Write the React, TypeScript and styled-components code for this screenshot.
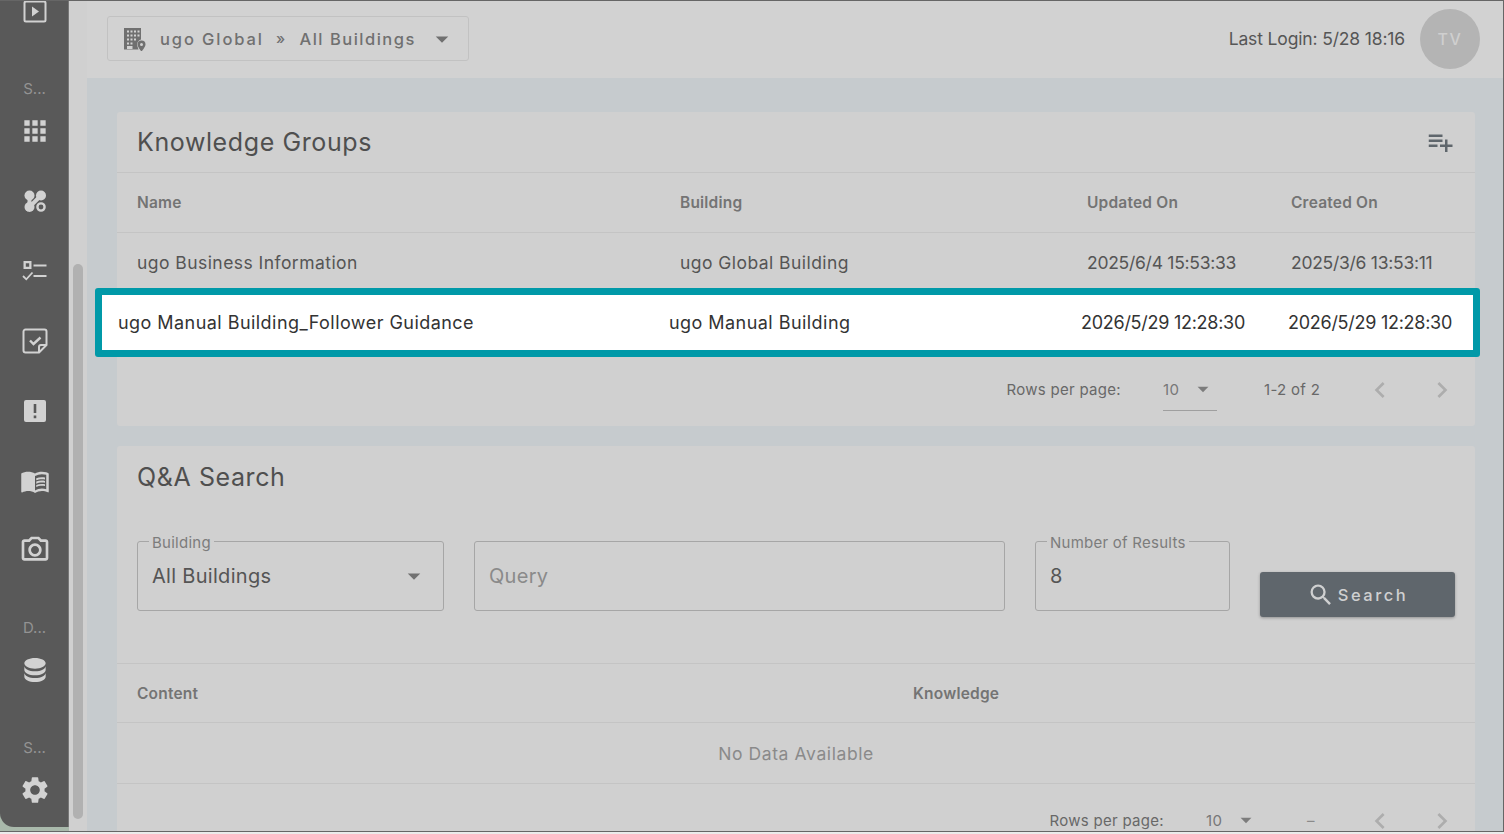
import { FC, ReactNode } from 'react';
import styled, { createGlobalStyle } from 'styled-components';
import {
  MdApps,
  MdArrowDropDown,
  MdChevronLeft,
  MdChevronRight,
  MdMenuBook,
  MdOutlinePhotoCamera,
  MdPlaylistAdd,
  MdSearch,
  MdSettings,
} from 'react-icons/md';

const FONT = `Inter, "Liberation Sans", sans-serif`;

const PlayIcon = () => (
  <svg width="26" height="26" viewBox="0 0 26 26" fill="none">
    <rect x="2.5" y="2.5" width="21" height="20" rx="1.5" stroke="currentColor" strokeWidth="2" />
    <path d="M10 7.5 L17 12.5 L10 17.5 Z" fill="currentColor" />
  </svg>
);

const NodesIcon = () => (
  <svg width="26" height="26" viewBox="0 0 26 26" fill="none">
    <circle cx="7.5" cy="7.5" r="5" fill="currentColor" />
    <circle cx="19" cy="7.5" r="5" fill="currentColor" />
    <circle cx="7.5" cy="19" r="5" fill="currentColor" />
    <path d="M7.5 7.5 L7.5 19 L19 7.5" stroke="currentColor" strokeWidth="4" />
    <circle cx="19" cy="19" r="3.6" stroke="currentColor" strokeWidth="2.4" />
  </svg>
);

const ChecklistIcon = () => (
  <svg width="26" height="26" viewBox="0 0 26 26" fill="none">
    <path d="M1.500 3h8v8h-8z M3.800 5.300v3.400h3.400V5.300z" fill="currentColor" fillRule="evenodd" />
    <path d="M11.500 7.500h13 M11.500 18h13" stroke="currentColor" strokeWidth="2" />
    <path d="M1 18 L4.300 21.300 L10.500 14.500" stroke="currentColor" strokeWidth="1.800" />
  </svg>
);

const NoteCheckIcon = () => (
  <svg width="26" height="26" viewBox="0 0 26 26" fill="none">
    <path
      d="M3.500 1.500h19a2 2 0 0 1 2 2V17l-7.500 7.500H3.500a2 2 0 0 1-2-2v-19a2 2 0 0 1 2-2z"
      stroke="currentColor"
      strokeWidth="2"
      strokeLinejoin="round"
    />
    <path d="M24 17h-5a2 2 0 0 0-2 2v5" stroke="currentColor" strokeWidth="2" />
    <path d="M8 12.500l3.500 3.500 7-6.500" stroke="currentColor" strokeWidth="2.400" />
  </svg>
);

const AlertBoxIcon = () => (
  <svg width="26" height="26" viewBox="0 0 26 26">
    <path
      d="M4 2h18a2 2 0 0 1 2 2v18a2 2 0 0 1-2 2H4a2 2 0 0 1-2-2V4a2 2 0 0 1 2-2z M11.700 6v9h2.600V6z M11.700 17.500v2.700h2.600v-2.700z"
      fill="currentColor"
      fillRule="evenodd"
    />
  </svg>
);

const DatabaseIcon = () => (
  <svg width="32" height="32" viewBox="0 0 24 24">
    <path
      fill="currentColor"
      d="M12,3C7.58,3 4,4.79 4,7C4,9.21 7.58,11 12,11C16.42,11 20,9.21 20,7C20,4.79 16.42,3 12,3M4,9V12C4,14.21 7.58,16 12,16C16.42,16 20,14.21 20,12V9C20,11.21 16.42,13 12,13C7.58,13 4,11.21 4,9M4,14V17C4,19.21 7.58,21 12,21C16.42,21 20,19.21 20,17V14C20,16.21 16.42,18 12,18C7.58,18 4,16.21 4,14Z"
    />
  </svg>
);

const BuildingPinIcon = () => (
  <svg width="24" height="24" viewBox="0 0 24 24">
    <path
      fill="currentColor"
      fillRule="evenodd"
      d="M1 1h17v11.500a6 6 0 0 0-4 5.500l1.500 4.500H1z M4 3.500v2h2v-2z M7.500 3.500v2h2v-2z M11 3.500v2h2v-2z M14.500 3.500v2h2v-2z M4 7.500v2h2v-2z M7.500 7.500v2h2v-2z M11 7.500v2h2v-2z M14.500 7.500v2h2v-2z M4 11.500v2h2v-2z M7.500 11.500v2h2v-2z M11 11.500v2h2v-2z M4 15.500v2h2v-2z M7.500 15.500v2h2v-2z M4 19v3h5.500v-3z"
    />
    <path
      fill="currentColor"
      fillRule="evenodd"
      d="M18.500 13.500a4 4 0 0 1 4 4c0 2.500-4 7-4 7s-4-4.500-4-7a4 4 0 0 1 4-4z M18.500 16a1.500 1.500 0 1 0 0 3 1.500 1.500 0 0 0 0-3z"
    />
  </svg>
);

const GlobalStyle = createGlobalStyle`
  html, body {
    margin: 0;
    padding: 0;
    width: 1504px;
    height: 834px;
    overflow: hidden;
    background: #ebebeb;
    font-family: ${FONT};
  }
  * { box-sizing: border-box; }
`;

const Frame = styled.div`
  display: flex;
  width: 1504px;
  height: 832px;
  overflow: hidden;
  background: #a9b9ab;
  border-top: 1px solid #666;
  border-bottom: 1px solid #666;
  border-right: 1px solid #666;
`;

const Sidebar = styled.nav`
  flex: 0 0 69px;
  height: 826px;
  overflow: hidden;
  background: #595959;
  border-bottom-left-radius: 14px;
  color: #d2d2d2;
  box-shadow: inset -1px 0 #777;
`;

const SideList = styled.div`
  display: flex;
  flex-direction: column;
  margin-top: -24px;
`;

const SideItem = styled.div<{ $tight?: boolean }>`
  display: flex;
  flex: 0 0 70px;
  align-items: center;
  justify-content: center;
  margin-top: ${(p) => (p.$tight ? '-1px' : '0')};

  svg { display: block; }
`;

const SideLabel = styled.div<{ $compact?: boolean }>`
  display: flex;
  flex: 0 0 ${(p) => (p.$compact ? '49px' : '50px')};
  align-items: flex-end;
  justify-content: center;
  font-size: 15px;
  line-height: 14px;
  color: #939393;
`;

const Gutter = styled.div`
  flex: 0 0 18px;
  padding: 263px 4px 0;
  background: #d0d0d0;
`;

const Thumb = styled.div`
  height: 555px;
  border-radius: 5px;
  background: #b1b1b1;
`;

const Main = styled.main`
  position: relative;
  display: flex;
  flex: 1;
  flex-direction: column;
  min-width: 0;
  background: #c6cbce;
`;

const TopBar = styled.header`
  display: flex;
  flex: 0 0 77px;
  align-items: center;
  justify-content: space-between;
  padding: 0 23px 2px 20px;
  background: #d2d2d2;
`;

const ScopeButton = styled.div`
  display: flex;
  align-items: center;
  width: 362px;
  height: 45px;
  padding: 0 10px 0 15px;
  color: #707070;
  border: 1px solid #c2c2c2;
  border-radius: 3px;
  font-size: 16.500px;
  letter-spacing: 1.500px;
  font-weight: 500;
`;

const ScopeText = styled.span`
  margin-left: 13px;
  letter-spacing: 1.900px;
`;

const ScopeSep = styled.span`
  margin: 0 13px 0 12px;
  font-size: 15px;
`;

const ScopeCaret = styled.span`
  display: flex;
  margin-left: auto;
  margin-right: 1px;
  font-size: 30px;
`;

const UserBox = styled.div`
  display: flex;
  align-items: center;
  gap: 15px;
  color: #565656;
  font-size: 17.500px;
  letter-spacing: -0.150px;
`;

const Avatar = styled.div`
  display: flex;
  align-items: center;
  justify-content: center;
  width: 60px;
  height: 60px;
  border-radius: 50%;
  background: #b4b4b4;
  color: #cfcfcf;
  font-size: 16px;
  font-weight: 500;
  letter-spacing: 1.500px;
`;

const Content = styled.div`
  display: flex;
  flex-direction: column;
  gap: 20px;
  padding: 34px 28px 0 30px;
`;

const Card = styled.section`
  flex-shrink: 0;
  border-radius: 3px;
  background: #d0d0d0;
`;

const CardHeader = styled.div<{ $flat?: boolean }>`
  display: flex;
  align-items: center;
  justify-content: space-between;
  height: 61px;
  padding: 0 20px;
  border-bottom: ${(p) => (p.$flat ? '0' : '1px solid #c4c4c4')};
  color: #4f4f4f;

  svg { display: block; }
`;

const CardTitle = styled.h2`
  margin: 0;
  font-size: 25px;
  font-weight: 400;
  letter-spacing: 0.600px;
  color: #4f4f4f;
`;

const Row = styled.div<{ $head?: boolean; $topLine?: boolean; $columns: string }>`
  position: relative;
  display: grid;
  grid-template-columns: ${(p) => p.$columns};
  align-items: center;
  height: 60px;
  padding: 0 20px;
  border-top: ${(p) => (p.$topLine ? '1px solid #c4c4c4' : '0')};
  border-bottom: 1px solid #c4c4c4;
  color: ${(p) => (p.$head ? '#747474' : '#555')};
  font-size: ${(p) => (p.$head ? '15.500px' : '17.500px')};
  font-weight: ${(p) => (p.$head ? 600 : 400)};
  letter-spacing: ${(p) => (p.$head ? '0.200px' : '0.450px')};
`;

const DateCell = styled.span`
  letter-spacing: -0.015em;
`;

// teal callout drawn over the second row
const Highlight = styled.div`
  position: absolute;
  top: -5px;
  left: -22px;
  right: -5px;
  bottom: -5px;
  display: grid;
  grid-template-columns: 551px 412px 207px 1fr;
  align-items: center;
  padding-left: 16px;
  background: #fff;
  border: 7px solid #0099a8;
  border-radius: 3px;
  color: #333;
  font-size: 18px;
`;

const NoData = styled.div`
  display: flex;
  align-items: center;
  justify-content: center;
  height: 61px;
  border-bottom: 1px solid #c4c4c4;
  color: #8a8a8a;
  font-size: 17.500px;
  letter-spacing: 0.600px;
`;

const Pager = styled.div`
  display: flex;
  align-items: center;
  justify-content: flex-end;
  height: 73px;
  padding-right: 17px;
  color: #686868;
  font-size: 15px;
  letter-spacing: 0.300px;
`;

const PerPage = styled.div<{ $underlined?: boolean }>`
  display: flex;
  align-items: center;
  width: 54px;
  height: 42px;
  margin-left: 42px;
  border-bottom: 1px solid ${(p) => (p.$underlined ? '#9f9f9f' : 'transparent')};
  color: #777;

  svg { flex-shrink: 0; margin-left: 11px; color: #7c7c7c; }
`;

const PageRange = styled.div<{ $dim?: boolean }>`
  width: ${(p) => (p.$dim ? '62px' : '105px')};
  padding-left: 47px;
  color: ${(p) => (p.$dim ? '#8a8a8a' : '#686868')};
  white-space: nowrap;
`;

const PageArrows = styled.div`
  display: flex;
  gap: 30px;
  margin-left: 42px;
  color: #adadad;

  svg { display: block; }
`;

const SearchRow = styled.div`
  display: flex;
  align-items: flex-start;
  gap: 30px;
  padding: 34px 20px 46px;
`;

const Field = styled.fieldset<{ $width: number }>`
  position: relative;
  display: flex;
  align-items: center;
  justify-content: space-between;
  flex: 0 0 ${(p) => p.$width}px;
  height: 78px;
  min-width: 0;
  margin: -8px 0 0;
  padding: 0 14px 8px;
  border: 1px solid #a6a6a6;
  border-radius: 3px;
  color: #555;
  font-size: 20px;
  letter-spacing: 0.300px;
`;

const FieldLegend = styled.legend<{ $empty?: boolean }>`
  height: 16px;
  padding: 0 ${(p) => (p.$empty ? '0' : '3px')};
  margin-left: -3px;
  color: #7c7c7c;
  font-size: 15px;
  line-height: 20px;
  letter-spacing: 0.250px;
`;

const FieldPlaceholder = styled.span`
  color: #8a8a8a;
`;

const FieldCaret = styled.span`
  display: flex;
  color: #717171;
  font-size: 30px;
`;

const SearchButton = styled.button`
  display: flex;
  flex: 0 0 195px;
  align-items: center;
  justify-content: center;
  gap: 3px;
  height: 45px;
  margin-top: 31px;
  padding: 0;
  border: 0;
  border-radius: 3px;
  background: #5f666c;
  box-shadow: 0 1px 3px rgba(0, 0, 0, 0.3);
  color: #cfd0d1;
  font-family: ${FONT};
  font-size: 16.500px;
  font-weight: 500;
  letter-spacing: 2.500px;
`;

const NAV_TOP: ReactNode[] = [<NodesIcon />, <ChecklistIcon />, <NoteCheckIcon />, <AlertBoxIcon />, <MdMenuBook size={30} />];

const GROUP_COLUMNS = '543px 407px 204px 1fr';
const QA_COLUMNS = '776px 1fr';

const App: FC = () => {
  return (
    <>
      <GlobalStyle />
      <Frame>
        <Sidebar>
          <SideList>
            <SideItem><PlayIcon /></SideItem>
            <SideLabel $compact>S...</SideLabel>
            <SideItem><MdApps size={32} /></SideItem>
            {NAV_TOP.map((icon, i) => (
              <SideItem key={i}>{icon}</SideItem>
            ))}
            <SideItem $tight><MdOutlinePhotoCamera size={32} /></SideItem>
            <SideLabel>D...</SideLabel>
            <SideItem><DatabaseIcon /></SideItem>
            <SideLabel>S...</SideLabel>
            <SideItem><MdSettings size={32} /></SideItem>
          </SideList>
        </Sidebar>
        <Gutter>
          <Thumb />
        </Gutter>
        <Main>
          <TopBar>
            <ScopeButton>
              <BuildingPinIcon />
              <ScopeText>ugo Global</ScopeText>
              <ScopeSep>»</ScopeSep>
              <span>All Buildings</span>
              <ScopeCaret><MdArrowDropDown /></ScopeCaret>
            </ScopeButton>
            <UserBox>
              <span>Last Login: 5/28 18:16</span>
              <Avatar>TV</Avatar>
            </UserBox>
          </TopBar>
          <Content>
            <Card>
              <CardHeader>
                <CardTitle>Knowledge Groups</CardTitle>
                <MdPlaylistAdd size={30} color="#5f666c" />
              </CardHeader>
              <Row $head $columns={GROUP_COLUMNS}>
                <span>Name</span>
                <span>Building</span>
                <span>Updated On</span>
                <span>Created On</span>
              </Row>
              <Row $columns={GROUP_COLUMNS}>
                <span>ugo Business Information</span>
                <span>ugo Global Building</span>
                <DateCell>2025/6/4 15:53:33</DateCell>
                <DateCell>2025/3/6 13:53:11</DateCell>
              </Row>
              <Row $columns={GROUP_COLUMNS}>
                <Highlight>
                  <span>ugo Manual Building_Follower Guidance</span>
                  <span>ugo Manual Building</span>
                  <DateCell>2026/5/29 12:28:30</DateCell>
                  <DateCell>2026/5/29 12:28:30</DateCell>
                </Highlight>
              </Row>
              <Pager>
                <span>Rows per page:</span>
                <PerPage $underlined>
                  10
                  <MdArrowDropDown size={26} />
                </PerPage>
                <PageRange>1-2 of 2</PageRange>
                <PageArrows>
                  <MdChevronLeft size={32} />
                  <MdChevronRight size={32} />
                </PageArrows>
              </Pager>
            </Card>
            <Card>
              <CardHeader $flat>
                <CardTitle>Q&amp;A Search</CardTitle>
              </CardHeader>
              <SearchRow>
                <Field $width={307}>
                  <FieldLegend>Building</FieldLegend>
                  <span>All Buildings</span>
                  <FieldCaret><MdArrowDropDown /></FieldCaret>
                </Field>
                <Field $width={531}>
                  <FieldLegend $empty />
                  <FieldPlaceholder>Query</FieldPlaceholder>
                </Field>
                <Field $width={195}>
                  <FieldLegend>Number of Results</FieldLegend>
                  <span>8</span>
                </Field>
                <SearchButton>
                  <MdSearch size={28} />
                  Search
                </SearchButton>
              </SearchRow>
              <Row $head $topLine $columns={QA_COLUMNS}>
                <span>Content</span>
                <span>Knowledge</span>
              </Row>
              <NoData>No Data Available</NoData>
              <Pager>
                <span>Rows per page:</span>
                <PerPage>
                  10
                  <MdArrowDropDown size={26} />
                </PerPage>
                <PageRange $dim>–</PageRange>
                <PageArrows>
                  <MdChevronLeft size={32} />
                  <MdChevronRight size={32} />
                </PageArrows>
              </Pager>
            </Card>
          </Content>
        </Main>
      </Frame>
    </>
  );
};

export default App;
